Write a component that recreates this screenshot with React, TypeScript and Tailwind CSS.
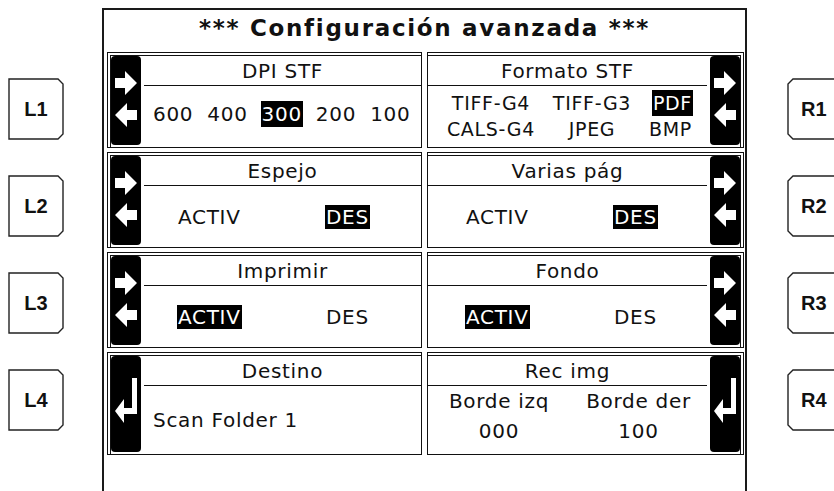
import React from 'react';

type Side = 'left' | 'right';

function SideKey({ label, side }: { label: string; side: Side }) {
    const points =
        side === 'left'
            ? '1,1 50,1 55,6 55,56 50,61 1,61'
            : '6,1 60,1 60,61 6,61 1,56 1,6';
    return (
        <div className={`relative flex h-[62px] items-center ${side === 'left' ? 'w-[56px] justify-center' : 'w-[62px] pl-[14px]'}`}>
            <svg className="absolute inset-0" width={side === 'left' ? 56 : 62} height={62}>
                <polygon points={points} fill="white" stroke="#222" strokeWidth={1.4} />
            </svg>
            <span className="relative font-['Liberation_Sans',Arial,sans-serif] text-[20px] font-bold text-[#111]">
                {label}
            </span>
        </div>
    );
}

function ArrowBar() {
    return (
        <svg width={30} height={88} className="block">
            <path d="M4 22h10v-7l12 12-12 12v-7H4z" fill="white" />
            <path d="M26 54H16v-7L4 59l12 12v-7h10z" fill="white" />
        </svg>
    );
}

function EnterBar() {
    return (
        <svg width={30} height={94} className="block">
            <path d="M21 22h5v36H13v9L4 55l9-12v9h8z" fill="white" />
        </svg>
    );
}

function Opt({ label, on }: { label: string; on?: boolean }) {
    return (
        <span className={`whitespace-nowrap px-[1px] leading-[26px] ${on ? 'bg-black text-white' : ''}`}>
            {label}
        </span>
    );
}

interface PanelProps {
    title: string;
    side: Side;
    enter?: boolean;
    children: React.ReactNode;
}

function Panel({ title, side, enter, children }: PanelProps) {
    const bar = (
        <div className="mb-[2px] w-[30px] shrink-0 overflow-hidden rounded-[4px] bg-black">
            {enter ? <EnterBar /> : <ArrowBar />}
        </div>
    );
    return (
        <div className={`flex h-full border border-[#111] ${side === 'left' ? 'w-[315px]' : 'w-[317px]'}`}>
            <div
                className={`mt-[2px] flex flex-1 border-t border-[#111] ${
                    side === 'left' ? 'ml-[2px] border-l' : 'mr-[2px] border-r'
                }`}
            >
                {side === 'left' && bar}
                <div className={`flex min-w-0 flex-1 flex-col ${side === 'left' ? 'pl-[3px]' : 'pr-[3px]'}`}>
                    <div className="flex h-[30px] shrink-0 items-center justify-center border-b border-[#111]">
                        {title}
                    </div>
                    <div className="flex-1">{children}</div>
                </div>
                {side === 'right' && bar}
            </div>
        </div>
    );
}

function Toggle({ on, side }: { on: boolean; side: Side }) {
    return (
        <div
            className={`grid h-full grid-cols-[148px_1fr] items-center ${
                side === 'left' ? 'pl-[33px]' : 'pl-[37px]'
            }`}
        >
            <div>
                <Opt label="ACTIV" on={on} />
            </div>
            <div>
                <Opt label="DES" on={!on} />
            </div>
        </div>
    );
}

export default function App() {
    return (
        <div className="flex h-[491px] w-[834px] overflow-hidden bg-white font-['DejaVu_Sans',Verdana,sans-serif] text-[#111]">
            {/* left soft keys */}
            <div className="flex w-[102px] shrink-0 flex-col gap-[35px] pl-[8px] pt-[78px]">
                <SideKey label="L1" side="left" />
                <SideKey label="L2" side="left" />
                <SideKey label="L3" side="left" />
                <SideKey label="L4" side="left" />
            </div>

            {/* screen */}
            <div className="mt-[8px] h-[490px] w-[645px] shrink-0 border-x-2 border-t-2 border-[#1a1a1a]">
                <div className="flex h-[42px] items-center justify-center pb-[5px] text-[23px] font-bold tracking-[1.7px]">
                    *** Configuración avanzada ***
                </div>

                <div className="flex flex-col gap-[4px] pl-[3px] pr-[1px] text-[20px] tracking-[0.7px]">
                    {/* row 1 */}
                    <div className="flex h-[96px] gap-[5px]">
                        <Panel title="DPI STF" side="left">
                            <div className="flex h-full items-center gap-[12px] pb-[6px] pl-[8px]">
                                <Opt label="600" />
                                <Opt label="400" />
                                <Opt label="300" on />
                                <Opt label="200" />
                                <Opt label="100" />
                            </div>
                        </Panel>
                        <Panel title="Formato STF" side="right">
                            <div className="flex h-full flex-col justify-center pb-[2px] text-[19px]">
                                <div className="grid h-[26px] grid-cols-[126px_76px_1fr] items-center pr-[14px]">
                                    <div className="flex justify-center"><Opt label="TIFF-G4" /></div>
                                    <div className="flex justify-center"><Opt label="TIFF-G3" /></div>
                                    <div className="flex justify-end"><Opt label="PDF" on /></div>
                                </div>
                                <div className="grid h-[26px] grid-cols-[126px_76px_1fr] items-center pr-[14px]">
                                    <div className="flex justify-center"><Opt label="CALS-G4" /></div>
                                    <div className="flex justify-center"><Opt label="JPEG" /></div>
                                    <div className="flex justify-end"><Opt label="BMP" /></div>
                                </div>
                            </div>
                        </Panel>
                    </div>

                    {/* row 2 */}
                    <div className="flex h-[96px] gap-[5px]">
                        <Panel title="Espejo" side="left">
                            <Toggle on={false} side="left" />
                        </Panel>
                        <Panel title="Varias pág" side="right">
                            <Toggle on={false} side="right" />
                        </Panel>
                    </div>

                    {/* row 3 */}
                    <div className="flex h-[96px] gap-[5px]">
                        <Panel title="Imprimir" side="left">
                            <Toggle on side="left" />
                        </Panel>
                        <Panel title="Fondo" side="right">
                            <Toggle on side="right" />
                        </Panel>
                    </div>

                    {/* row 4 */}
                    <div className="flex h-[103px] gap-[5px]">
                        <Panel title="Destino" side="left" enter>
                            <div className="flex h-full items-center pl-[9px]">Scan Folder 1</div>
                        </Panel>
                        <Panel title="Rec img" side="right" enter>
                            <div className="grid h-full grid-cols-[142px_1fr] content-center pb-[8px]">
                                <div className="text-center leading-[30px]">Borde izq</div>
                                <div className="text-center leading-[30px]">Borde der</div>
                                <div className="text-center leading-[30px]">000</div>
                                <div className="text-center leading-[30px]">100</div>
                            </div>
                        </Panel>
                    </div>
                </div>
            </div>

            {/* right soft keys */}
            <div className="flex shrink-0 flex-col gap-[35px] pl-[40px] pt-[78px]">
                <SideKey label="R1" side="right" />
                <SideKey label="R2" side="right" />
                <SideKey label="R3" side="right" />
                <SideKey label="R4" side="right" />
            </div>
        </div>
    );
}
